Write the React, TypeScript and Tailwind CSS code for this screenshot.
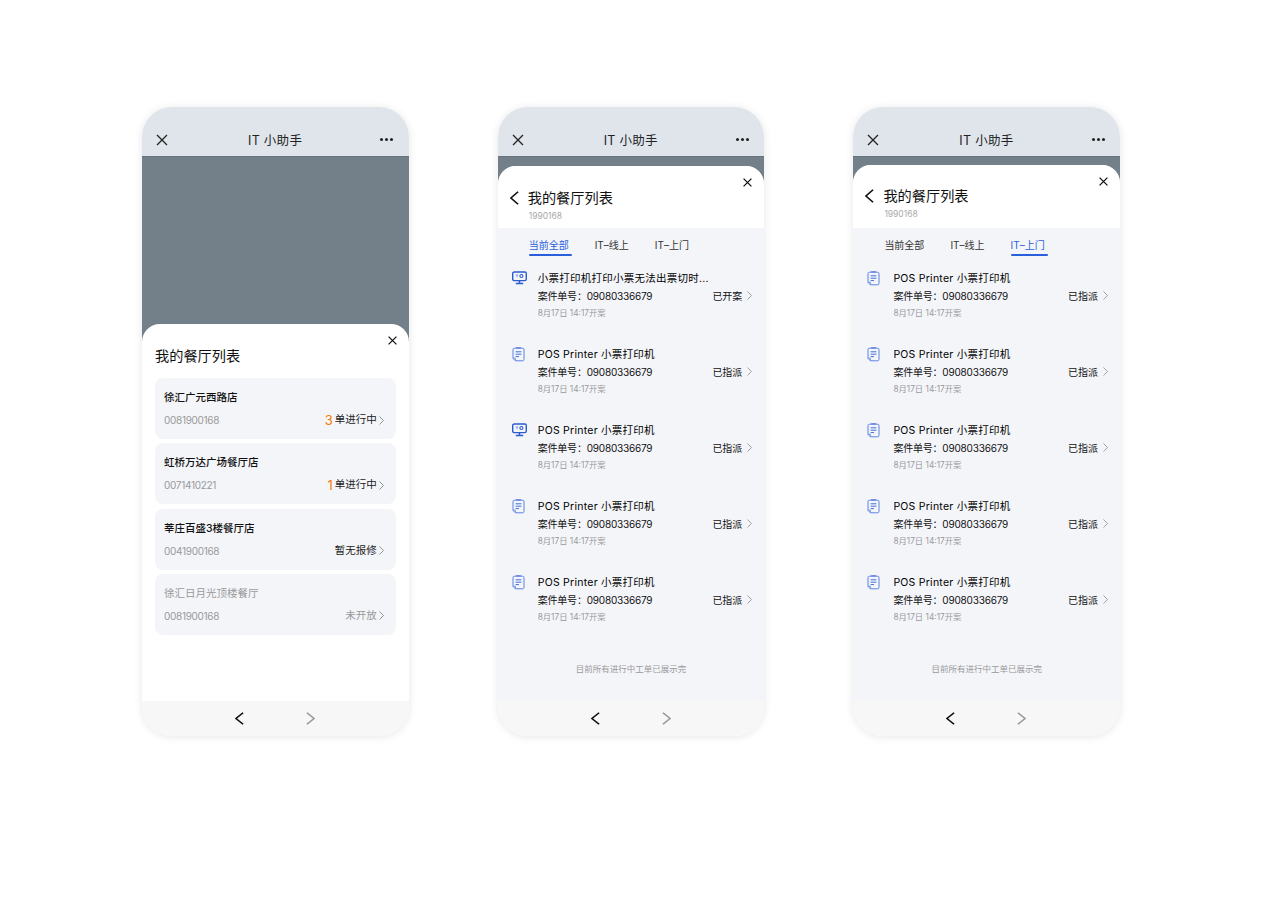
const font = "font-['Inter','Noto_Sans_CJK_SC',sans-serif]"

function CloseIcon({ size = 14, width = 1.3 }: { size?: number; width?: number }) {
  return (
    <svg width={size} height={size} viewBox="0 0 14 14" fill="none" stroke="currentColor" strokeWidth={width}>
      <path d="M2 2l10 10M12 2L2 12" />
    </svg>
  )
}

function Chevron({ left = false, className = '', w = 5, h = 9 }: { left?: boolean; className?: string; w?: number; h?: number }) {
  return (
    <svg width={w} height={h} viewBox="0 0 5 9" fill="none" stroke="currentColor" strokeWidth={0.9} className={className} preserveAspectRatio="none">
      <path d={left ? 'M4.5 .5L.5 4.5l4 4' : 'M.5 .5l4 4-4 4'} />
    </svg>
  )
}

function MonitorIcon() {
  return (
    <svg width="15" height="14" viewBox="0 0 15 14" fill="none" className="text-[#2a5bd0]">
      <rect x="0.7" y="1" width="13.6" height="8.6" rx="1.6" stroke="currentColor" strokeWidth="1.4" />
      <path d="M3.8 4h2.4M5 4v2" stroke="#7d9ee8" strokeWidth="1" />
      <circle cx="9.4" cy="5" r="1.5" stroke="currentColor" strokeWidth="1.1" />
      <path d="M7.5 9.8v2M3.8 12.6h7.4" stroke="currentColor" strokeWidth="1.5" />
    </svg>
  )
}

function DocIcon() {
  return (
    <svg width="13" height="15" viewBox="0 0 13 15" fill="none" className="text-[#5b82e4]">
      <path d="M2.4 1.2h8.2a1.4 1.4 0 0 1 1.4 1.4v9.8a1.4 1.4 0 0 1-1.4 1.4H3.4L1 11.4V2.6a1.4 1.4 0 0 1 1.4-1.4z" stroke="currentColor" strokeWidth="1" />
      <path d="M4 .8h5" stroke="currentColor" strokeWidth="1.2" />
      <path d="M3.6 4.8h5.8M3.6 7.2h5.8M3.6 9.6h3.4" stroke="#2f62d9" strokeWidth="0.9" />
      <path d="M1 11.2h2.4v2.6" stroke="currentColor" strokeWidth="0.8" />
    </svg>
  )
}

function TopBar() {
  return (
    <div className="h-[49px] shrink-0 bg-[#dfe5eb] flex items-end justify-between pl-[13px] pr-[15.5px] pb-[9px] text-[#222]">
      <CloseIcon />
      <span className="text-[12.5px] leading-[16px] tracking-[0.3px] mb-[-2px] ml-[1px]">IT 小助手</span>
      <span className="flex gap-[2px] mb-[6px]">
        <i className="w-[3px] h-[3px] rounded-full bg-[#222]" />
        <i className="w-[3px] h-[3px] rounded-full bg-[#222]" />
        <i className="w-[3px] h-[3px] rounded-full bg-[#222]" />
      </span>
    </div>
  )
}

function BottomBar() {
  return (
    <div className="h-[35px] shrink-0 bg-[#f7f7f8] flex items-center justify-center gap-[62px] pr-[1px]">
      <Chevron left w={9} h={13} className="text-[#111]" />
      <Chevron w={9} h={13} className="text-[#999]" />
    </div>
  )
}

function Phone({ children }: { children: React.ReactNode }) {
  return (
    <div className="w-[266.7px] h-[629px] rounded-[30px] overflow-hidden flex flex-col bg-white shadow-[0_1px_8px_rgba(0,0,0,0.1)]">
      <TopBar />
      {children}
      <BottomBar />
    </div>
  )
}

const stores = [
  { name: '徐汇广元西路店', code: '0081900168', num: '3', status: '单进行中' },
  { name: '虹桥万达广场餐厅店', code: '0071410221', num: '1', status: '单进行中' },
  { name: '莘庄百盛3楼餐厅店', code: '0041900168', status: '暂无报修' },
  { name: '徐汇日月光顶楼餐厅', code: '0081900168', status: '未开放', off: true },
]

function StoreCard({ s }: { s: (typeof stores)[number] }) {
  return (
    <div className="h-[61px] rounded-[8px] bg-[#f4f5f9] pl-[9px] pr-[12px] pt-[12px] flex flex-col">
      <div className={`text-[10.5px] leading-[16px] ${s.off ? 'text-[#999]' : 'text-[#111] font-medium'}`}>{s.name}</div>
      <div className="mt-[6px] flex items-center justify-between">
        <span className="text-[10px] leading-[16px] tracking-[-0.3px] text-[#999]">{s.code}</span>
        <span className={`flex items-center text-[10.5px] leading-[16px] ${s.off ? 'text-[#999]' : 'text-[#222]'}`}>
          {s.num && <span className="text-[13px] text-[#f57c00] mr-[2px]">{s.num}</span>}
          {s.status}
          <Chevron className="ml-[2px] text-[#888]" />
        </span>
      </div>
    </div>
  )
}

function FirstPhone() {
  return (
    <Phone>
      <div className="flex-1 bg-[#748089] border-t border-[#67737c] flex flex-col justify-end">
        <div className="h-[377px] rounded-t-[18px] bg-white relative pt-[23px] px-[13px]">
          <span className="absolute right-[11px] top-[11px] text-[#111]"><CloseIcon size={11} width={1.6} /></span>
          <div className="text-[14.2px] leading-[18px] text-[#111]">我的餐厅列表</div>
          <div className="mt-[13px] flex flex-col gap-[4.3px]">
            {stores.map((s, i) => <StoreCard key={i} s={s} />)}
          </div>
        </div>
      </div>
    </Phone>
  )
}

function CaseRow({ title, status, icon }: { title: string; status: string; icon: 'monitor' | 'doc' }) {
  return (
    <div className="h-[76px] shrink-0 flex pl-[14px] pr-[12px]">
      <div className="w-[26px] shrink-0">
        {icon === 'monitor' ? <MonitorIcon /> : <DocIcon />}
      </div>
      <div className="flex-1 min-w-0">
        <div className="text-[10.5px] leading-[16px] text-black tracking-[0.25px] truncate">{title}</div>
        <div className="mt-[1px] flex items-center justify-between text-[10px] leading-[16px] text-[#111]">
          <span className="tracking-[-0.2px]">案件单号：09080336679</span>
          <span className="flex items-center gap-[5px]">{status}<Chevron className="text-[#999]" /></span>
        </div>
        <div className="mt-[2.5px] text-[8.3px] leading-[14px] text-[#999]">8月17日 14:17开案</div>
      </div>
    </div>
  )
}

type Row = { title: string; status: string; icon: 'monitor' | 'doc' }
const pos = 'POS Printer 小票打印机'

function ListPhone({ active, rows, top, titleTop }: { active: number; rows: Row[]; top: number; titleTop: number }) {
  const tabs = ['当前全部', 'IT–线上', 'IT–上门']
  return (
    <Phone>
      <div className="flex-1 min-h-0 bg-[#748089] border-t border-[#67737c] flex flex-col justify-end">
        <div className="rounded-t-[18px] overflow-hidden bg-[#f4f5f9] flex flex-col" style={{ height: 545 - top }}>
          <div className="flex-1 bg-white relative pl-[12px]">
            <span className="absolute right-[11px] top-[11px] text-[#111]"><CloseIcon size={11} width={1.6} /></span>
            <div className="flex items-center gap-[9px]" style={{ marginTop: titleTop }}>
              <Chevron left w={9} h={14} className="text-[#111]" />
              <span className="text-[14.2px] leading-[18px] text-[#111]">我的餐厅列表</span>
            </div>
            <div className="text-[8.5px] leading-[12px] mt-[3px] ml-[19px] text-[#aaa]">1990168</div>
          </div>
          <div className="h-[473px] shrink-0 flex flex-col">
            <div className="h-[36px] shrink-0 flex pl-[31px] gap-[26px] pt-[10px]">
              {tabs.map((t, i) => (
                <div key={t} className="flex flex-col items-start">
                  <span className={`text-[10px] leading-[14px] ${i === active ? 'text-[#2a5fdc]' : 'text-[#333]'}`}>{t}</span>
                  <span className={`mt-[2px] h-[2px] rounded-full w-[calc(100%+3px)] ${i === active ? 'bg-[#2a5fdc]' : ''}`} />
                </div>
              ))}
            </div>
            <div className="pt-[6.5px] flex flex-col">
              {rows.map((r, i) => <CaseRow key={i} {...r} />)}
            </div>
            <div className="mt-[11.5px] text-center text-[8.5px] leading-[14px] text-[#999]">目前所有进行中工单已展示完</div>
          </div>
        </div>
      </div>
    </Phone>
  )
}

export default function App() {
  return (
    <div className={`${font} w-[1280px] h-[910px] bg-white pt-[107px] pl-[142px] flex gap-[89px] items-start overflow-hidden`}>
      <FirstPhone />
      <ListPhone
        active={0}
        top={10}
        titleTop={23}
        rows={[
          { title: '小票打印机打印小票无法出票切时...', status: '已开案', icon: 'monitor' },
          { title: pos, status: '已指派', icon: 'doc' },
          { title: pos, status: '已指派', icon: 'monitor' },
          { title: pos, status: '已指派', icon: 'doc' },
          { title: pos, status: '已指派', icon: 'doc' },
        ]}
      />
      <ListPhone
        active={2}
        top={9}
        titleTop={22}
        rows={[1, 2, 3, 4, 5].map(() => ({ title: pos, status: '已指派', icon: 'doc' as const }))}
      />
    </div>
  )
}
